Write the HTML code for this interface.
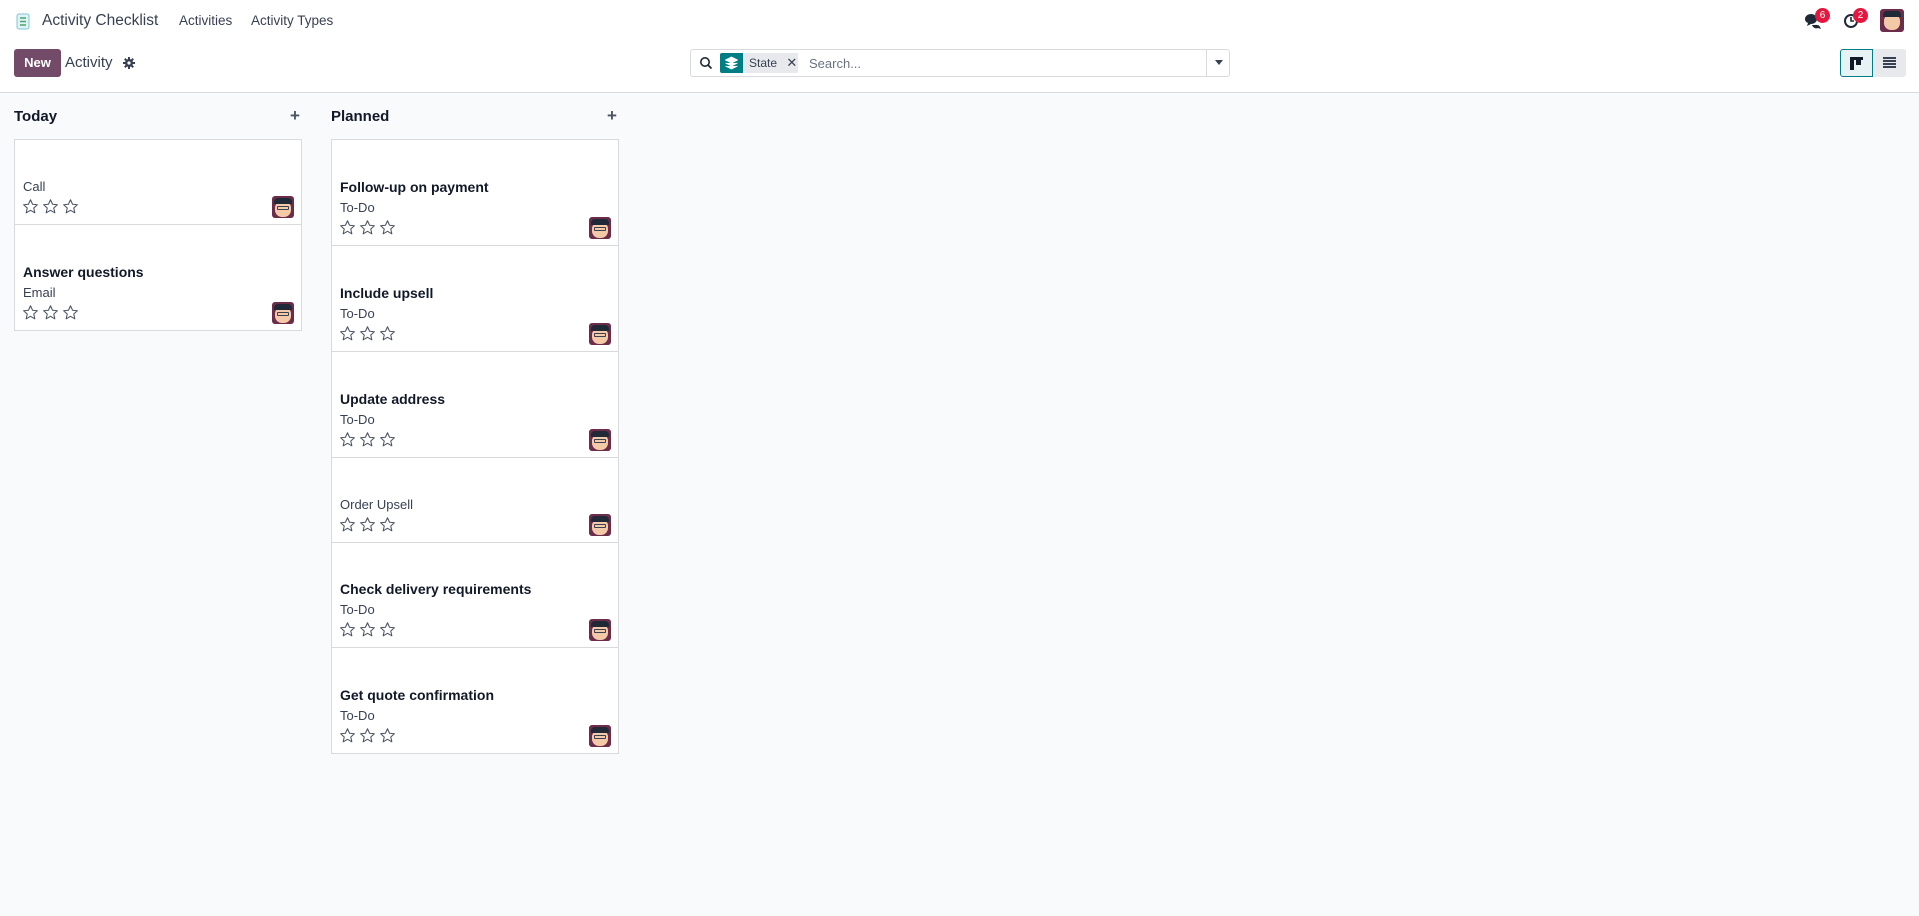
<!DOCTYPE html>
<html><head><meta charset="utf-8"><style>
*{box-sizing:border-box;margin:0;padding:0}
body{width:1919px;height:916px;background:#f9fafb;font-family:"Liberation Sans",sans-serif;color:#374151;position:relative;overflow:hidden;font-size:13px}
.top{position:absolute;left:0;top:0;width:1919px;height:93px;background:#fff;border-bottom:1px solid #d8dadd}
.a{position:absolute}
.card{position:absolute;background:#fff;border:1px solid #d8dadd}
.t{position:absolute;left:8px;font-weight:bold;font-size:14px;color:#111827}
.s{position:absolute;left:8px;font-size:13px;color:#374151}
.st{position:absolute;left:7px;display:flex;gap:3px}
.av{position:absolute;right:7px;width:22px;height:22px;border-radius:3px;background:#6b2d4a;overflow:hidden}
</style></head><body>
<div class="top">
 <svg class="a" style="left:16px;top:13px" width="14" height="17"><rect x="1" y="1" width="12" height="15" rx="2" fill="#dff3f5" stroke="#7fc6d6"/><g stroke="#4aa36f" stroke-width="1.5"><line x1="4" y1="5" x2="10" y2="5"/><line x1="4" y1="8.5" x2="10" y2="8.5"/><line x1="4" y1="12" x2="10" y2="12"/></g></svg>
 <div class="a" style="left:42px;top:12px;font-size:15.5px;color:#374151">Activity Checklist</div>
 <div class="a" style="left:179px;top:13px;font-size:13.5px;color:#374151">Activities</div>
 <div class="a" style="left:251px;top:13px;font-size:13.5px;color:#374151">Activity Types</div>
 <svg class="a" style="left:1804px;top:13px" width="18" height="16"><path d="M1 6c0-3 3-5 6-5s6 2 6 5-3 5-6 5l-4 2 1-3C2 9 1 8 1 6z" fill="#1f2937"/><path d="M8 12c3 0 7-1 8 2l1 2-3-1c-2 1-5 0-6-3z" fill="#1f2937"/></svg>
 <div class="a" style="left:1815px;top:8px;width:15px;height:15px;border-radius:8px;background:#e5173f;color:#fff;font-size:10px;text-align:center;line-height:15px">6</div>
 <svg class="a" style="left:1843px;top:13px" width="16" height="16"><circle cx="8" cy="8" r="6" fill="none" stroke="#1f2937" stroke-width="2"/><path d="M8 4v4h3" stroke="#1f2937" stroke-width="1.6" fill="none"/></svg>
 <div class="a" style="left:1853px;top:8px;width:15px;height:15px;border-radius:8px;background:#e5173f;color:#fff;font-size:10px;text-align:center;line-height:15px">2</div>
 <div class="a av" style="left:1880px;top:9px;width:24px;height:23px;right:auto"><div style="position:absolute;left:4px;top:5px;width:16px;height:16px;border-radius:7px;background:#f3c9a8"></div><div style="position:absolute;left:3px;top:2px;width:18px;height:6px;border-radius:4px 4px 0 0;background:#1f2937"></div></div>
 <div class="a" style="left:14px;top:49px;width:47px;height:28px;background:#714b67;border-radius:3px;color:#fff;font-weight:bold;font-size:13px;text-align:center;line-height:28px">New</div>
 <div class="a" style="left:65px;top:54px;font-size:15px;color:#374151">Activity</div>
 <svg class="a" style="left:123px;top:57px" width="12" height="12" viewBox="0 0 12 12"><g fill="#374151"><circle cx="6" cy="6" r="4"/><rect x="5" y="0" width="2" height="12"/><rect x="0" y="5" width="12" height="2"/><rect x="5" y="0" width="2" height="12" transform="rotate(45 6 6)"/><rect x="5" y="0" width="2" height="12" transform="rotate(-45 6 6)"/></g><circle cx="6" cy="6" r="1.6" fill="#fff"/></svg>
 <div class="a" style="left:690px;top:49px;width:540px;height:28px;border:1px solid #d8dadd;border-radius:3px;background:#fff">
  <svg class="a" style="left:8px;top:6px" width="14" height="14"><circle cx="6" cy="6" r="4.2" fill="none" stroke="#1f2937" stroke-width="1.6"/><line x1="9" y1="9" x2="12.5" y2="12.5" stroke="#1f2937" stroke-width="1.8"/></svg>
  <div class="a" style="left:29px;top:3px;width:23px;height:20px;background:#017e84;border-radius:2px 0 0 2px"><svg style="margin:3px 5px" width="13" height="14"><path d="M6.5 1l6 3-6 3-6-3z M0.5 7l6 3 6-3 M0.5 10l6 3 6-3" fill="#fff" stroke="#fff" stroke-width="0.8"/></svg></div>
  <div class="a" style="left:52px;top:3px;width:55px;height:20px;background:#e7e9ed;font-size:12px;line-height:20px;padding-left:6px;color:#374151">State <span style="margin-left:6px;font-size:13px">✕</span></div>
  <div class="a" style="left:118px;top:6px;color:#6b7280;font-size:13px">Search...</div>
  <div class="a" style="left:515px;top:0;width:24px;height:26px;border-left:1px solid #d8dadd"><svg style="margin:10px 8px" width="8" height="5"><path d="M0 0h8L4 5z" fill="#374151"/></svg></div>
 </div>
 <div class="a" style="left:1840px;top:49px;width:33px;height:28px;background:#e6f2f3;border:1px solid #017e84;border-radius:3px 0 0 3px"><svg style="margin:7px 9px" width="13" height="13"><rect x="0" y="0" width="13" height="3" fill="#111827"/><rect x="0" y="0" width="4" height="13" fill="#111827"/><rect x="6" y="0" width="5" height="8" fill="#111827"/></svg></div>
 <div class="a" style="left:1873px;top:49px;width:33px;height:28px;background:#e7e9ed;border-radius:0 3px 3px 0"><svg style="margin:8px 10px" width="13" height="11"><g fill="#374151"><rect y="0" width="13" height="2"/><rect y="3" width="13" height="2"/><rect y="6" width="13" height="2"/><rect y="9" width="13" height="2"/></g></svg></div>
</div>
<div class="a" style="left:14px;top:108px;font-weight:bold;font-size:15px;color:#111827">Today</div>
<div class="a" style="left:290px;top:106px;font-weight:bold;font-size:17px;color:#4b5563">+</div>
<div class="a" style="left:331px;top:108px;font-weight:bold;font-size:15px;color:#111827">Planned</div>
<div class="a" style="left:607px;top:106px;font-weight:bold;font-size:17px;color:#4b5563">+</div>
<div id="cards"></div>
<script>
const star='<svg width="17" height="17" viewBox="0 0 24 24"><path d="M12 2.5l2.9 6.3 6.8.7-5.1 4.6 1.5 6.8L12 17.4l-6.1 3.5 1.5-6.8-5.1-4.6 6.8-.7z" fill="none" stroke="#4b5563" stroke-width="1.5" stroke-linejoin="round"/></svg>';
const av='<div style="position:absolute;left:3px;top:5px;width:16px;height:16px;border-radius:7px;background:#f3c9a8"></div><div style="position:absolute;left:2px;top:2px;width:18px;height:6px;border-radius:4px 4px 0 0;background:#1f2937"></div><div style="position:absolute;left:5px;top:10px;width:12px;height:4px;border:1px solid #374151;border-radius:1px"></div>';
const cols=[[14,[139,224,330],[[null,'Call'],['Answer questions','Email']]],
[331,[139,245,351,457,542,647,753],[['Follow-up on payment','To-Do'],['Include upsell','To-Do'],['Update address','To-Do'],[null,'Order Upsell'],['Check delivery requirements','To-Do'],['Get quote confirmation','To-Do']]]];
let h='';
for(const [x,ys,items] of cols){items.forEach((it,i)=>{const top=ys[i],ht=ys[i+1]-ys[i]+1;
h+=`<div class="card" style="left:${x}px;top:${top}px;width:288px;height:${ht}px">`;
if(it[0])h+=`<div class="t" style="bottom:50px">${it[0]}</div>`;
h+=`<div class="s" style="bottom:30px">${it[1]}</div><div class="st" style="bottom:9px">${star+star+star}</div><div class="av" style="bottom:6px">${av}</div></div>`;});}
document.getElementById('cards').innerHTML=h;
</script>
</body></html>
